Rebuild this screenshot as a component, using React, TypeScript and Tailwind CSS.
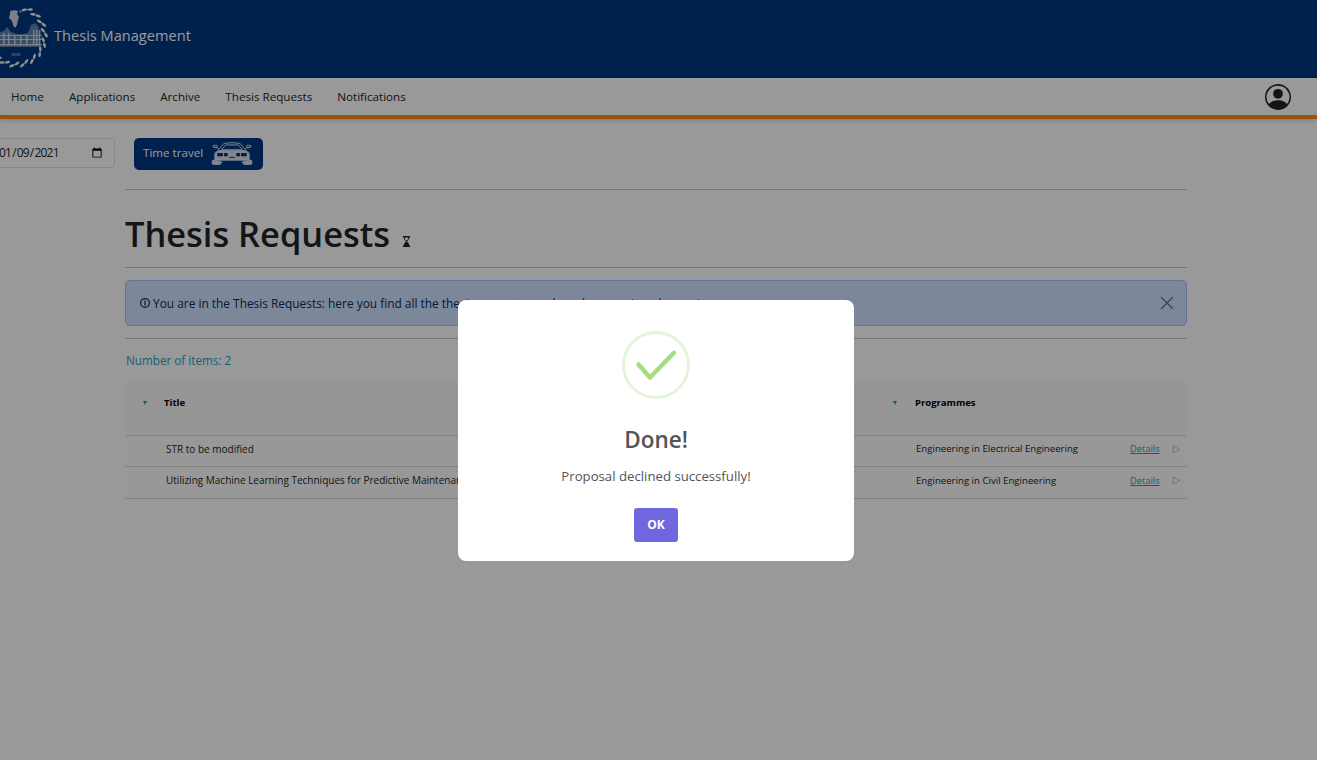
const NAV_ITEMS = ['Home', 'Applications', 'Archive', 'Thesis Requests', 'Notifications'];

const ROWS = [
  { title: 'STR to be modified', programme: 'Engineering in Electrical Engineering' },
  {
    title: 'Utilizing Machine Learning Techniques for Predictive Maintenance in Civil Infrastructure',
    programme: 'Engineering in Civil Engineering',
  },
];

// leaves of the wreath, clockwise from the upper right
const LEAF_ANGLES = [-72, -62, -52, -42, -32, -22, -12, -2, 8, 18, 28, 38, 48, 58, 68, 78, 88, 98, 108, 118, 128, 138, 148];

function Logo() {
  return (
    <svg viewBox="0 0 50 70" className="h-[70px] w-[50px] shrink-0 text-[#f2f2f2]" fill="currentColor">
      <g>
        {LEAF_ANGLES.map((angle, index) => {
          const radius = index % 2 === 0 ? 27.5 : 30;
          const x = 16 + radius * Math.cos((angle * Math.PI) / 180);
          const y = 32 + radius * Math.sin((angle * Math.PI) / 180);
          return (
            <ellipse
              key={angle}
              cx={x}
              cy={y}
              rx="2.8"
              ry="1.3"
              transform={`rotate(${angle + 60} ${x} ${y})`}
            />
          );
        })}
      </g>
      <path d="M10 7c3-1 6-1 8 0l-1 3 2 3-1 3-1 5-2 3-2-3-1-4-3-3 1-4z" opacity=".85" />
      <path d="M20 6l2 1-1 2-2-1z" opacity=".6" />
      <path d="M0 28l4-1 3-4 4 5 6 2h6l5-1 3-8 4-2 3 3 2 7v14H0z" opacity=".4" />
      <path d="M0 31h42v1H0zM0 35h42v1H0zM0 40h42v1.500H0z" opacity=".7" />
      <path d="M3 29h1.500v12H3zM8 29h1.500v12H8zM14 32h1.500v9H14zM20 32h1.500v9H20zM26 32h1.500v9H26zM33 26h1.500v15H33zM36 26h1.500v15H36zM39 26h1.500v15H39z" opacity=".7" />
      <text x="11" y="52" fontSize="4.200" fontFamily="Liberation Sans, sans-serif" opacity=".75">
        1859
      </text>
    </svg>
  );
}

function Car() {
  return (
    <svg viewBox="0 0 44 26" className="h-[25px] w-[42px] opacity-85" fill="none" stroke="currentColor" strokeWidth="1">
      <path d="M8 9 13.500 2.500C19 1.500 25 1.500 30.500 2.500L36 9" />
      <path d="M11 9 15.500 4h13L33 9z" />
      <path d="M3 6 8 8M41 6 36 8" />
      <ellipse cx="4.500" cy="5.500" rx="2.500" ry="1.200" />
      <ellipse cx="39.500" cy="5.500" rx="2.500" ry="1.200" />
      <path d="M7 10h30l3 3v7H4v-7z" fill="currentColor" />
      <path d="M7 13h5v2.500H7zM14 13h3v2.500h-3zM27 13h3v2.500h-3zM32 13h5v2.500h-5zM19 17h6" stroke="#003780" fill="#003780" />
      <path d="M2 19.500 1 23c0 1 1 1.500 2 1.500h6c1 0 1.500-.5 2-3M42 19.500 43 23c0 1-1 1.500-2 1.500h-6c-1 0-1.500-.5-2-3" fill="currentColor" />
    </svg>
  );
}

function PersonCircle() {
  return (
    <svg viewBox="0 0 16 16" className="h-[26px] w-[26px]" fill="#212529">
      <path d="M11 6a3 3 0 1 1-6 0 3 3 0 0 1 6 0z" />
      <path
        fillRule="evenodd"
        d="M0 8a8 8 0 1 1 16 0A8 8 0 0 1 0 8zm8-7a7 7 0 0 0-5.468 11.37C3.242 11.226 4.805 10 8 10s4.757 1.225 5.468 2.37A7 7 0 0 0 8 1z"
      />
    </svg>
  );
}

function SortCaret() {
  return <span className="block h-0 w-0 border-x-[2.5px] border-t-[4px] border-x-transparent border-t-[#17a2c4]" />;
}

function Divider() {
  return <div className="h-px bg-[#c4c4c4]" />;
}

export default function App() {
  return (
    <div className="relative h-[760px] w-[1317px] overflow-hidden bg-white font-['Open_Sans',sans-serif] text-[#212529]">
      <header className="flex h-[78px] items-center bg-[#003780]">
        <Logo />
        <span className="ml-[4px] -mt-[6px] text-[14.6px] text-white">Thesis Management</span>
      </header>

      <nav className="flex h-[41px] items-center border-b-[4px] border-[#fc8c1c] pr-[26px] pl-[11px] shadow-[0_2px_4px_rgba(0,0,0,0.15)]">
        <ul className="flex gap-[25px] text-[11.65px]">
          {NAV_ITEMS.map((item) => (
            <li key={item}>{item}</li>
          ))}
        </ul>
        <div className="ml-auto">
          <PersonCircle />
        </div>
      </nav>

      <div className="mt-[19px] flex items-start gap-[19px]">
        <input
          className="-ml-[15px] h-[30px] w-[130px] rounded-[4px] border border-[#dee2e6] bg-white pr-[9px] pl-3 text-[12px] tracking-[-0.8px]"
          type="date"
          defaultValue="2021-01-09"
        />
        <button className="flex h-[32px] w-[129px] items-center gap-2 rounded-[5px] bg-[#003780] pb-[2px] pl-[9px] text-[11.6px] text-white" type="button">
          Time travel
          <Car />
        </button>
      </div>

      <main className="mx-[125px] mt-[19px] w-[1062px]">
        <Divider />
        <div className="flex h-[77px] items-center pt-[11px]">
          <h1 className="text-[34.4px] font-[550] text-[#212529]">Thesis Requests</h1>
          <svg viewBox="0 0 10 12" className="mt-[14px] ml-[12px] h-[11px] w-[9px]" fill="#212529">
            <path d="M1 0h8v1.500H8C8 4 6.500 5 5.500 6 6.500 7 8 8 8 10.500h1V12H1v-1.500h1C2 8 3.500 7 4.500 6 3.500 5 2 4 2 1.500H1zM3 1.500c0 2 1 3 2 3.500 1-.5 2-1.500 2-3.500z" />
          </svg>
        </div>
        <Divider />

        <div className="mt-3 flex h-[46px] items-center rounded-[5px] border border-[#9ec5fe] bg-[#cfe2ff] pr-[12px] pl-[14px] text-[11.9px] text-[#052c65]">
          <svg viewBox="0 0 16 16" className="mr-[3px] h-[10px] w-[10px]" fill="none" stroke="currentColor" strokeWidth="2">
            <circle cx="8" cy="8" r="7" />
            <path d="M8 4v8" />
          </svg>
          <span className="pt-[2px]">You are in the Thesis Requests: here you find all the thesis requests you have been assigned to review</span>
          <svg viewBox="0 0 14 14" className="ml-auto h-[14px] w-[14px]" fill="none" stroke="#6c757d" strokeWidth="1.400">
            <path d="M1 1l12 12M13 1 1 13" />
          </svg>
        </div>
        <div className="mt-3">
          <Divider />
        </div>

        <p className="mt-[13px] pl-px text-[11.7px] text-[#17a2c4]">Number of items: 2</p>

        <section className="mt-[12px] text-[9.65px]">
          <div className="flex h-[54px] items-start border-b border-[#d8d8d8] bg-[#fafafa] pt-[14px] text-[9.5px] font-bold text-black">
            <div className="flex w-[39px] justify-end pt-[5px] pr-[17px]">
              <SortCaret />
            </div>
            <div className="w-[729px]">Title</div>
            <div className="flex w-[22px] pt-[5px]">
              <SortCaret />
            </div>
            <div>Programmes</div>
          </div>
          {ROWS.map((row) => (
            <div key={row.title} className="flex h-[31.500px] items-center border-b border-[#d8d8d8] bg-[#fdfdfd] pb-[3px]">
              <div className="w-[41px]" />
              <div className="w-[750px] truncate text-[10px]">{row.title}</div>
              <div className="w-[214px]">{row.programme}</div>
              <a className="text-[9.3px] text-[#17a2c4] underline" href="#details">
                Details
              </a>
              <svg viewBox="0 0 8 8" className="ml-[12px] h-[9px] w-[9px]" fill="none" stroke="#a9c3cb" strokeWidth=".8">
                <path d="M1 .8v6.400L7 4z" />
              </svg>
            </div>
          ))}
        </section>
      </main>

      <div className="absolute inset-0 bg-black/40 pt-[300px] pl-[458px]">
        <div className="flex h-[261px] w-[396px] flex-col items-center rounded-[8px] bg-white pt-[31px] text-[#545454]">
          <div className="relative h-[68px] w-[68px] rounded-full border-[3px] border-[#a5dc86]/30">
            <svg viewBox="0 0 68 68" className="absolute -top-[3px] -left-[3px] h-[68px] w-[68px]" fill="none" stroke="#a5dc86" strokeWidth="4.500" strokeLinecap="round" strokeLinejoin="round">
              <path d="M16.500 33.500 28 46.500 52 21.800" />
            </svg>
          </div>
          <h2 className="mt-[25px] text-[22.5px] leading-[32px] font-semibold">Done!</h2>
          <p className="mt-[10px] text-[13.2px] leading-[20px]">Proposal declined successfully!</p>
          <button className="mt-[22px] h-[34px] w-[44px] rounded-[3px] bg-[#7066e0] text-[12px] font-bold text-white" type="button">
            OK
          </button>
        </div>
      </div>
    </div>
  );
}
